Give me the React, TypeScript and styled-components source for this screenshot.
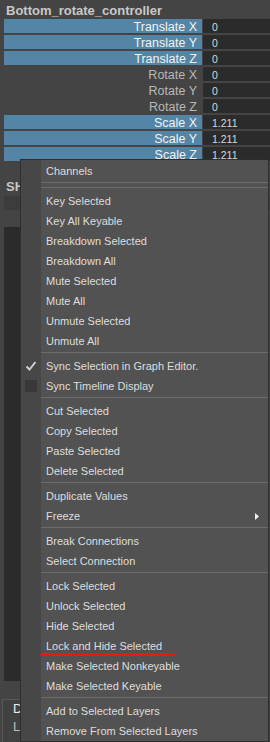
import React from "react";
import styled, { createGlobalStyle } from "styled-components";

const Global = createGlobalStyle`
  html, body { margin: 0; padding: 0; background: #444444; }
  body { font-family: "Liberation Sans", Arial, sans-serif; }
  * { box-sizing: border-box; }
`;

const Page = styled.div`
  position: relative;
  width: 270px;
  height: 742px;
  overflow: hidden;
  background: #444444;
  display: flex;
  flex-direction: column;
`;

const Title = styled.div`
  font-weight: bold;
  font-size: 13px;
  line-height: 16px;
  height: 16px;
  color: #c8c8c8;
  margin-top: 3px;
  padding-left: 6px;
  white-space: nowrap;
`;

const Rows = styled.div`
  display: flex;
  flex-direction: column;
  gap: 2px;
  padding-left: 4px;
`;

const Row = styled.div`
  display: grid;
  grid-template-columns: 198px 67px;
  column-gap: 1px;
  height: 14px;
`;

const Label = styled.div<{ $selected?: boolean }>`
  background: ${(p) => (p.$selected ? "#5285a6" : "transparent")};
  color: ${(p) => (p.$selected ? "#f2f2f2" : "#b8b8b8")};
  font-size: 12.5px;
  line-height: 16px;
  height: 14px;
  text-align: right;
  padding-right: 5px;
  white-space: nowrap;
`;

const Value = styled.div`
  background: #2b2b2b;
  color: #d8d8d8;
  font-size: 10.5px;
  line-height: 16px;
  height: 14px;
  padding-left: 9px;
`;

const Section = styled.div`
  font-weight: bold;
  font-size: 13px;
  line-height: 16px;
  height: 16px;
  color: #c8c8c8;
  margin-top: 18px;
  padding-left: 6px;
`;

const ShapeBar = styled.div`
  margin: 1px 0 0 4px;
  height: 14px;
  background: #3c3c3c;
`;

const DarkPanel = styled.div`
  margin: 17px 4px 0 4px;
  height: 454px;
  background: #2b2b2b;
`;

const Tabs = styled.div`
  margin: 18px 0 0 2px;
  flex: 1;
  border-top: 1px solid #575757;
  border-left: 1px solid #575757;
  background: #414141;
  padding: 1px 0 0 10px;
  display: flex;
  flex-direction: column;
  gap: 2px;
`;

const TabText = styled.div<{ $active?: boolean }>`
  font-size: 13px;
  line-height: 16px;
  color: ${(p) => (p.$active ? "#ececec" : "#bcbcbc")};
  white-space: nowrap;
`;

const Menu = styled.div`
  position: absolute;
  left: 20px;
  top: 159px;
  width: 249px;
  bottom: 0;
  border: 1px solid #2e2e2e;
  background: linear-gradient(to right, #474747 20px, #525252 20px);
  padding-top: 1px;
  display: flex;
  flex-direction: column;
`;

const Item = styled.div`
  display: grid;
  grid-template-columns: 20px 1fr auto;
  align-items: center;
  height: 20px;
  font-size: 11px;
  line-height: 20px;
  color: #dedede;
  white-space: nowrap;
`;

const Gutter = styled.div`
  display: flex;
  align-items: center;
  padding-left: 4px;
  height: 20px;
`;

const Box = styled.div`
  width: 12px;
  height: 12px;
  background: #383838;
`;

const ItemLabel = styled.div`
  padding-left: 5px;
`;

const Arrow = styled.div`
  padding-right: 9px;
  display: flex;
  align-items: center;
`;

const DoubleSep = styled.div`
  margin: 1px 0 3px 20px;
  height: 6px;
  border-top: 1px solid #6c6c6c;
  border-bottom: 1px solid #6c6c6c;
`;

const Sep = styled.div`
  margin: 1px 0 3px 20px;
  height: 1px;
  background: #6c6c6c;
`;

const Underline = styled.div`
  position: absolute;
  left: 40px;
  top: 653px;
  width: 135px;
  height: 3px;
  border-radius: 2px;
  background: #e21a1a;
`;

type Entry =
  | { kind: "item"; label: string; check?: "on" | "off"; sub?: boolean }
  | { kind: "sep" }
  | { kind: "dsep" };

const it = (label: string, extra: Partial<{ check: "on" | "off"; sub: boolean }> = {}): Entry => ({
  kind: "item",
  label,
  ...extra,
});
const sep: Entry = { kind: "sep" };

const entries: Entry[] = [
  it("Channels"),
  { kind: "dsep" },
  it("Key Selected"),
  it("Key All Keyable"),
  it("Breakdown Selected"),
  it("Breakdown All"),
  it("Mute Selected"),
  it("Mute All"),
  it("Unmute Selected"),
  it("Unmute All"),
  sep,
  it("Sync Selection in Graph Editor.", { check: "on" }),
  it("Sync Timeline Display", { check: "off" }),
  sep,
  it("Cut Selected"),
  it("Copy Selected"),
  it("Paste Selected"),
  it("Delete Selected"),
  sep,
  it("Duplicate Values"),
  it("Freeze", { sub: true }),
  sep,
  it("Break Connections"),
  it("Select Connection"),
  sep,
  it("Lock Selected"),
  it("Unlock Selected"),
  it("Hide Selected"),
  it("Lock and Hide Selected"),
  it("Make Selected Nonkeyable"),
  it("Make Selected Keyable"),
  sep,
  it("Add to Selected Layers"),
  it("Remove From Selected Layers"),
];

const channels = [
  { name: "Translate X", value: "0", sel: true },
  { name: "Translate Y", value: "0", sel: true },
  { name: "Translate Z", value: "0", sel: true },
  { name: "Rotate X", value: "0", sel: false },
  { name: "Rotate Y", value: "0", sel: false },
  { name: "Rotate Z", value: "0", sel: false },
  { name: "Scale X", value: "1.211", sel: true },
  { name: "Scale Y", value: "1.211", sel: true },
  { name: "Scale Z", value: "1.211", sel: true },
];

const Check = () => (
  <svg width="12" height="12" viewBox="0 0 12 12">
    <polyline points="1.5,6.5 4.5,9.5 10.5,2" fill="none" stroke="#cfcfcf" strokeWidth="2" />
  </svg>
);

const SubArrow = () => (
  <svg width="4" height="7" viewBox="0 0 4 7">
    <polygon points="0,0 4,3.5 0,7" fill="#f0f0f0" />
  </svg>
);

export default function App() {
  return (
    <>
      <Global />
      <Page>
        <Title>Bottom_rotate_controller</Title>
        <Rows>
          {channels.map((c) => (
            <Row key={c.name}>
              <Label $selected={c.sel}>{c.name}</Label>
              <Value>{c.value}</Value>
            </Row>
          ))}
        </Rows>
        <Section>SH</Section>
        <ShapeBar />
        <DarkPanel />
        <Tabs>
          <TabText $active>D</TabText>
          <TabText>La</TabText>
        </Tabs>
        <Menu>
          {entries.map((e, i) => {
            if (e.kind === "sep") return <Sep key={i} />;
            if (e.kind === "dsep") return <DoubleSep key={i} />;
            return (
              <Item key={i}>
                <Gutter>
                  {e.check === "on" && <Check />}
                  {e.check === "off" && <Box />}
                </Gutter>
                <ItemLabel>{e.label}</ItemLabel>
                <Arrow>{e.sub && <SubArrow />}</Arrow>
              </Item>
            );
          })}
        </Menu>
        <Underline />
      </Page>
    </>
  );
}
